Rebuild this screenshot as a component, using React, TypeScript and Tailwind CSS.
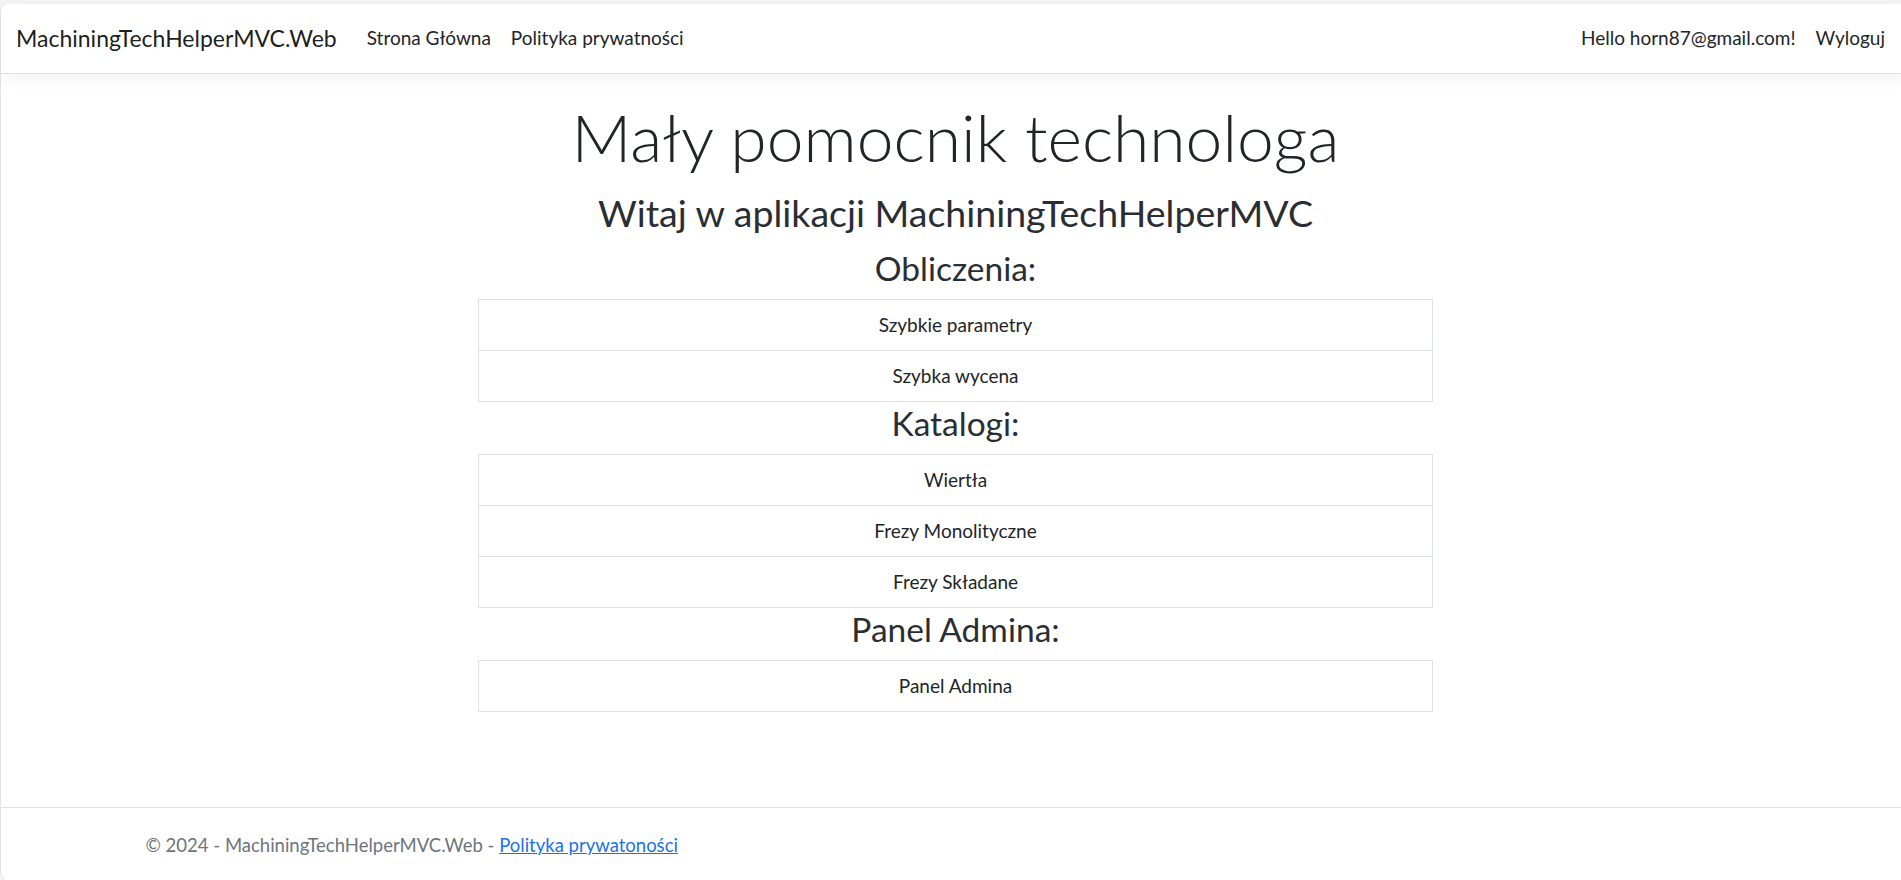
import React from 'react';

const sections = [
  { title: 'Obliczenia:', items: ['Szybkie parametry', 'Szybka wycena'] },
  { title: 'Katalogi:', items: ['Wiertła', 'Frezy Monolityczne', 'Frezy Składane'] },
  { title: 'Panel Admina:', items: ['Panel Admina'] },
];

const font = "font-['Lato','Noto_Sans',sans-serif]";

const Navbar = () => (
  <nav className="h-[70px] bg-white border-b border-[#dee2e6] shadow-[0_5px_15px_rgba(0,0,0,0.05)] rounded-tl-[8px] flex items-center px-[15px] relative z-10">
    <a className="text-[23px] text-[#000000e6] mr-[20px] leading-[37px]">MachiningTechHelperMVC.Web</a>
    <ul className="flex flex-1">
      <li><a className="block px-[10px] text-[19px] text-[#212529]">Strona Główna</a></li>
      <li><a className="block px-[10px] text-[19px] text-[#212529]">Polityka prywatności</a></li>
    </ul>
    <ul className="flex">
      <li><a className="block px-[10px] text-[19px] text-[#212529]">Hello horn87@gmail.com!</a></li>
      <li><a className="block px-[10px] text-[19px] text-[#212529]">Wyloguj</a></li>
    </ul>
  </nav>
);

const Section = ({ title, items }: { title: string; items: string[] }) => (
  <div>
    <h3 className="text-[33.5px] leading-[42px] mb-[10px] text-[#2a2e33]">{title}</h3>
    <ul className="border border-[#dee2e6]">
      {items.map((item, i) => (
        <li
          key={item}
          className={`flex items-center justify-center text-[19px] text-[#212529] ${i > 0 ? 'border-t border-[#dee2e6] h-[51px]' : 'h-[50px]'}`}
        >
          {item}
        </li>
      ))}
    </ul>
  </div>
);

export default function App() {
  return (
    <div className={`w-screen h-[880px] overflow-hidden bg-[#f3f3f3] pt-[4px] ${font}`}>
      <div className="w-[1910px] h-[876px] bg-white rounded-l-[8px] border-l border-[#e3e3e3] flex flex-col">
        <Navbar />

        {/* Main content */}
        <main className="flex-1 pt-[21px]">
          <div className="w-[955px] mx-auto text-center">
            <h1 className="text-[66px] leading-[84px] font-light text-[#212529] mb-[10px]">Mały pomocnik technologa</h1>
            <h2 className="text-[37.5px] leading-[48px] text-[#2a2e33] mb-[10px]">Witaj w aplikacji MachiningTechHelperMVC</h2>
            {sections.map((s) => (
              <Section key={s.title} title={s.title} items={s.items} />
            ))}
          </div>
        </main>

        {/* Footer */}
        <footer className="h-[73px] border-t border-[#dee2e6] text-[#6c757d] text-[18.5px] whitespace-nowrap">
          <div className="w-[1650px] mx-auto px-[15px] leading-[75px]">
            © 2024 - MachiningTechHelperMVC.Web - <a className="text-[#1b72e8] underline">Polityka prywatoności</a>
          </div>
        </footer>
      </div>
    </div>
  );
}
